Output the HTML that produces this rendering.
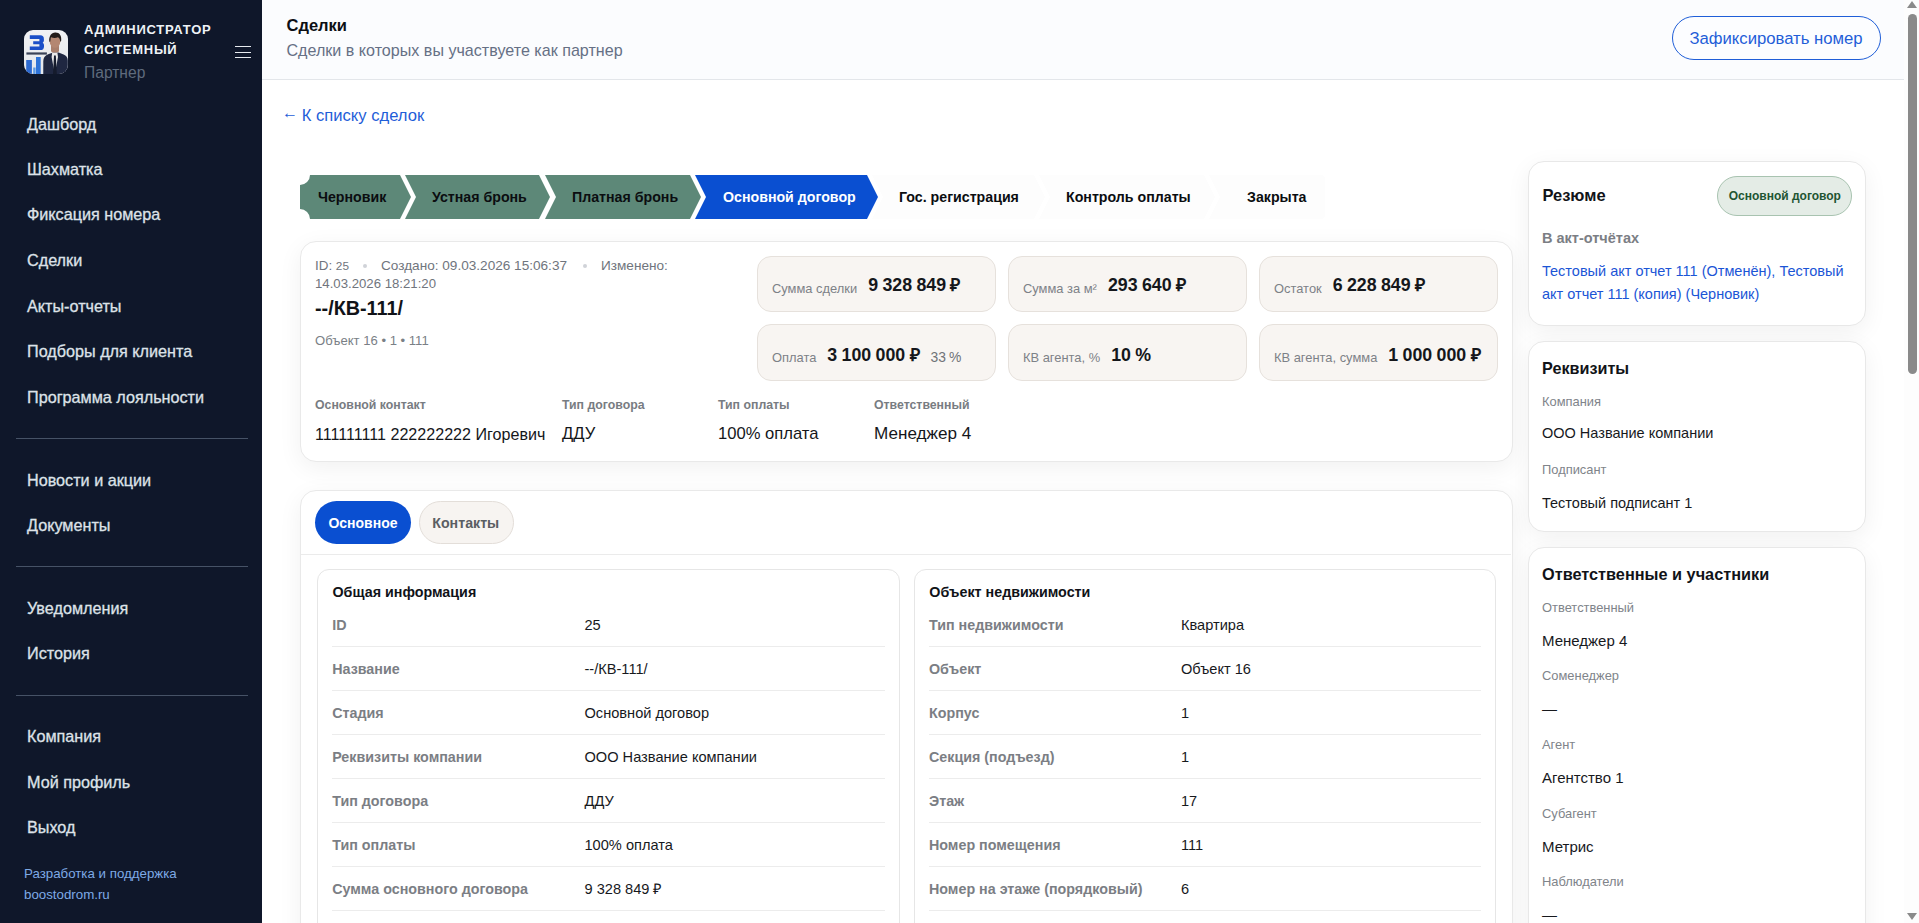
<!DOCTYPE html>
<html lang="ru"><head><meta charset="utf-8"><title>Сделки</title>
<style>
html,body{margin:0;padding:0;width:1919px;height:923px;overflow:hidden;background:#fff}
body{position:relative;font-family:"Liberation Sans",sans-serif}
.b{position:absolute}
.t{position:absolute;white-space:nowrap}
.met{display:flex;align-items:baseline;line-height:24px}
.ml{font-size:12.9px;color:#7d8187;margin-right:11px}
.mv{font-size:17.8px;font-weight:700;color:#15171b;word-spacing:-0.6px;position:relative;top:-1.5px}
.mx{font-size:13.9px;color:#6f7378;margin-left:11px;word-spacing:-1px}
</style></head><body>
<div class="b" style="left:0px;top:0px;width:262px;height:923px;background:#0f172a"></div>
<div class="b" style="left:262px;top:0px;width:1642px;height:79px;background:#fbfcfe"></div>
<div class="b" style="left:262px;top:79px;width:1642px;height:1px;background:#e3e6ea"></div>
<div class="b" style="left:262px;top:80px;width:1642px;height:843px;background:#fff"></div>
<svg class="b" style="left:24px;top:30px" width="44" height="44" viewBox="0 0 44 44">
<defs><clipPath id="lc"><rect x="0" y="0" width="44" height="44" rx="9" ry="9"/></clipPath>
<linearGradient id="bg1" x1="0" y1="0" x2="0" y2="1"><stop offset="0" stop-color="#f1f2f4"/><stop offset="1" stop-color="#e4e7eb"/></linearGradient></defs>
<g clip-path="url(#lc)">
<rect width="44" height="44" fill="url(#bg1)"/>
<path d="M5.8 5.3h10.5a3.6 3.6 0 0 1 3.6 3.6v1.6a2.6 2.6 0 0 1-1.2 2.2 2.8 2.8 0 0 1 1.3 2.4v1.3a3.6 3.6 0 0 1-3.6 3.6H5.8v-3.4h9.6v-2.3H9.2v-3h6.2v-2.2H5.8z" fill="#1b4fc8"/>
<rect x="2.4" y="22.4" width="20.5" height="2.2" fill="#3a4358"/>
<rect x="2.2" y="30" width="5.7" height="14" fill="#2d6ad0"/>
<rect x="9.2" y="37.5" width="2.4" height="7" fill="#5b9ae6"/>
<rect x="12" y="27" width="4.7" height="17" fill="#2f74d8"/>
<rect x="19.8" y="36.5" width="3.2" height="8" fill="#4d8fe2"/>
<rect x="26" y="42" width="3" height="2" fill="#3fa0f0"/>
<rect x="31" y="42" width="4.5" height="2" fill="#3fa0f0"/>
<path d="M19.3 44V31.5c0-3.5 1.5-6 4.8-7.3l5-1.8h5.5l5 2c2.6 1 4.2 3 4.2 6V44z" fill="#1f2741"/>
<path d="M28.2 22.5l2.6 0.3 2.6-0.3 0.6 4.5-3.2 17-3.2-17z" fill="#e9e9ea"/>
<path d="M30 25.5h1.8l1 18.5h-3.8z" fill="#151b2c"/>
<rect x="27" y="14" width="8" height="8.5" rx="2" fill="#a97f6c"/>
<ellipse cx="31" cy="11.5" rx="5.3" ry="6.3" fill="#b48772"/>
<path d="M25.3 11.5c-0.6-5.3 2-8.8 5.9-9 4.2-0.2 6.6 3 6 8.2l-1 1.2c0-2.3-0.8-4-2.2-4.6-2.2 0.8-4.6 0.8-7 0l-0.9 4.8z" fill="#231c1a"/>
</g></svg>
<div class="t " style="left:84px;top:21.70px;font-size:13px;line-height:16px;font-weight:700;color:#eef2f6;letter-spacing:0.75px">АДМИНИСТРАТОР</div>
<div class="t " style="left:84px;top:41.90px;font-size:13px;line-height:16px;font-weight:700;color:#eef2f6;letter-spacing:0.75px">СИСТЕМНЫЙ</div>
<div class="t " style="left:84px;top:62.79px;font-size:15.6px;line-height:20px;font-weight:400;color:#5f6b7d;">Партнер</div>
<div class="b" style="left:235px;top:46px;width:16px;height:1.35px;background:#e6eaef"></div>
<div class="b" style="left:235px;top:51.5px;width:16px;height:1.35px;background:#e6eaef"></div>
<div class="b" style="left:235px;top:57px;width:16px;height:1.35px;background:#e6eaef"></div>
<div class="t " style="left:27px;top:113.59px;font-size:16.2px;line-height:20px;font-weight:400;color:#dde2e8;-webkit-text-stroke:0.3px #dde2e8">Дашборд</div>
<div class="t " style="left:27px;top:158.89px;font-size:16.2px;line-height:20px;font-weight:400;color:#dde2e8;-webkit-text-stroke:0.3px #dde2e8">Шахматка</div>
<div class="t " style="left:27px;top:204.39px;font-size:16.2px;line-height:20px;font-weight:400;color:#dde2e8;-webkit-text-stroke:0.3px #dde2e8">Фиксация номера</div>
<div class="t " style="left:27px;top:249.89px;font-size:16.2px;line-height:20px;font-weight:400;color:#dde2e8;-webkit-text-stroke:0.3px #dde2e8">Сделки</div>
<div class="t " style="left:27px;top:295.59px;font-size:16.2px;line-height:20px;font-weight:400;color:#dde2e8;-webkit-text-stroke:0.3px #dde2e8">Акты-отчеты</div>
<div class="t " style="left:27px;top:340.99px;font-size:16.2px;line-height:20px;font-weight:400;color:#dde2e8;-webkit-text-stroke:0.3px #dde2e8">Подборы для клиента</div>
<div class="t " style="left:27px;top:386.59px;font-size:16.2px;line-height:20px;font-weight:400;color:#dde2e8;-webkit-text-stroke:0.3px #dde2e8">Программа лояльности</div>
<div class="t " style="left:27px;top:469.89px;font-size:16.2px;line-height:20px;font-weight:400;color:#dde2e8;-webkit-text-stroke:0.3px #dde2e8">Новости и акции</div>
<div class="t " style="left:27px;top:515.39px;font-size:16.2px;line-height:20px;font-weight:400;color:#dde2e8;-webkit-text-stroke:0.3px #dde2e8">Документы</div>
<div class="t " style="left:27px;top:597.79px;font-size:16.2px;line-height:20px;font-weight:400;color:#dde2e8;-webkit-text-stroke:0.3px #dde2e8">Уведомления</div>
<div class="t " style="left:27px;top:643.09px;font-size:16.2px;line-height:20px;font-weight:400;color:#dde2e8;-webkit-text-stroke:0.3px #dde2e8">История</div>
<div class="t " style="left:27px;top:726.09px;font-size:16.2px;line-height:20px;font-weight:400;color:#dde2e8;-webkit-text-stroke:0.3px #dde2e8">Компания</div>
<div class="t " style="left:27px;top:772.09px;font-size:16.2px;line-height:20px;font-weight:400;color:#dde2e8;-webkit-text-stroke:0.3px #dde2e8">Мой профиль</div>
<div class="t " style="left:27px;top:817.39px;font-size:16.2px;line-height:20px;font-weight:400;color:#dde2e8;-webkit-text-stroke:0.3px #dde2e8">Выход</div>
<div class="b" style="left:16px;top:438px;width:232px;height:1px;background:#465266"></div>
<div class="b" style="left:16px;top:566px;width:232px;height:1px;background:#465266"></div>
<div class="b" style="left:16px;top:695px;width:232px;height:1px;background:#465266"></div>
<div class="t " style="left:24px;top:864.89px;font-size:13.3px;line-height:17px;font-weight:400;color:#7eaae6;">Разработка и поддержка</div>
<div class="t " style="left:24px;top:885.89px;font-size:13.3px;line-height:17px;font-weight:400;color:#7eaae6;">boostodrom.ru</div>
<div class="t " style="left:286.5px;top:14.78px;font-size:16.5px;line-height:21px;font-weight:700;color:#0c0f14;">Сделки</div>
<div class="t " style="left:286.5px;top:40.42px;font-size:16.1px;line-height:20px;font-weight:400;color:#667085;">Сделки в которых вы участвуете как партнер</div>
<div class="b" style="left:1672px;top:16px;width:209px;height:44px;border:1.3px solid #1f5ed8;border-radius:22px;box-sizing:border-box;background:#fcfdff"></div>
<div class="t " style="left:1689.4px;top:28.01px;font-size:16.7px;line-height:21px;font-weight:400;color:#1f5ed8;">Зафиксировать номер</div>
<div class="t " style="left:282px;top:103.26px;font-size:16px;line-height:20px;font-weight:400;color:#1f5ed8;">←</div>
<div class="t " style="left:301.7px;top:105.05px;font-size:16.6px;line-height:21px;font-weight:400;color:#1f5ed8;">К списку сделок</div>
<div class="b" style="left:300px;top:175px;width:111px;height:44px;background:#5d8878;clip-path:path('M10 0H100L111 22L100 44H10A10 10 0 0 0 0 34V10A10 10 0 0 0 10 0Z')"></div>
<div class="t " style="left:318px;top:188.08px;font-size:14.2px;line-height:18px;font-weight:700;color:#0b0d10;">Черновик</div>
<div class="b" style="left:405px;top:175px;width:145px;height:44px;background:#5d8878;clip-path:polygon(0 0,134px 0,145px 50%,134px 100%,0 100%,11px 50%)"></div>
<div class="t " style="left:432px;top:188.08px;font-size:14.2px;line-height:18px;font-weight:700;color:#0b0d10;">Устная бронь</div>
<div class="b" style="left:545px;top:175px;width:156px;height:44px;background:#5d8878;clip-path:polygon(0 0,145px 0,156px 50%,145px 100%,0 100%,11px 50%)"></div>
<div class="t " style="left:572px;top:188.08px;font-size:14.2px;line-height:18px;font-weight:700;color:#0b0d10;">Платная бронь</div>
<div class="b" style="left:695px;top:175px;width:183px;height:44px;background:#0a4fd1;clip-path:polygon(0 0,172px 0,183px 50%,172px 100%,0 100%,11px 50%)"></div>
<div class="t " style="left:723px;top:188.08px;font-size:14.2px;line-height:18px;font-weight:700;color:#fff;">Основной договор</div>
<div class="b" style="left:872px;top:175px;width:173px;height:44px;background:#fdfdfd;clip-path:polygon(0 0,162px 0,173px 50%,162px 100%,0 100%,11px 50%)"></div>
<div class="t " style="left:899px;top:188.08px;font-size:14.2px;line-height:18px;font-weight:700;color:#0b0d10;">Гос. регистрация</div>
<div class="b" style="left:1039px;top:175px;width:176px;height:44px;background:#fdfdfd;clip-path:polygon(0 0,165px 0,176px 50%,165px 100%,0 100%,11px 50%)"></div>
<div class="t " style="left:1066px;top:188.08px;font-size:14.2px;line-height:18px;font-weight:700;color:#0b0d10;">Контроль оплаты</div>
<div class="b" style="left:1209px;top:175px;width:116px;height:44px;background:#fdfdfd;clip-path:path('M0 0H112A4 4 0 0 1 116 4V40A4 4 0 0 1 112 44H0L11 22Z')"></div>
<div class="t " style="left:1247px;top:188.08px;font-size:14.2px;line-height:18px;font-weight:700;color:#0b0d10;">Закрыта</div>
<div class="b" style="left:300px;top:241px;width:1213px;height:221px;border:1px solid #e9e9e9;border-radius:16px;box-sizing:border-box;background:#fff;box-shadow:0 6px 24px rgba(0,0,0,0.06)"></div>
<div class="t " style="left:315px;top:256.86px;font-size:13.4px;line-height:17px;font-weight:400;color:#70757d;">ID: <span style="font-size:11.8px">25</span></div>
<div class="b" style="left:363px;top:264px;width:4px;height:4px;background:#d0d3d8;border-radius:50%"></div>
<div class="t " style="left:381px;top:256.79px;font-size:13.6px;line-height:17px;font-weight:400;color:#70757d;">Создано: 09.03.2026 15:06:37</div>
<div class="b" style="left:583px;top:264px;width:4px;height:4px;background:#d0d3d8;border-radius:50%"></div>
<div class="t " style="left:601px;top:256.79px;font-size:13.6px;line-height:17px;font-weight:400;color:#70757d;">Изменено:</div>
<div class="t " style="left:315px;top:276.43px;font-size:13.2px;line-height:16px;font-weight:400;color:#70757d;">14.03.2026 18:21:20</div>
<div class="t " style="left:315px;top:295.84px;font-size:19.8px;line-height:25px;font-weight:700;color:#111318;">--/КВ-111/</div>
<div class="t " style="left:315px;top:333.26px;font-size:13.1px;line-height:16px;font-weight:400;color:#7a7f86;">Объект 16 • 1 • 111</div>
<div class="t " style="left:315px;top:397.54px;font-size:12.3px;line-height:15px;font-weight:700;color:#787c82;">Основной контакт</div>
<div class="t " style="left:315px;top:423.72px;font-size:16.1px;line-height:20px;font-weight:400;color:#15171b;">111111111 222222222 Игоревич</div>
<div class="t " style="left:562px;top:397.54px;font-size:12.3px;line-height:15px;font-weight:700;color:#787c82;">Тип договора</div>
<div class="t " style="left:562px;top:423.05px;font-size:16.6px;line-height:21px;font-weight:400;color:#15171b;">ДДУ</div>
<div class="t " style="left:718px;top:397.54px;font-size:12.3px;line-height:15px;font-weight:700;color:#787c82;">Тип оплаты</div>
<div class="t " style="left:718px;top:423.05px;font-size:16.6px;line-height:21px;font-weight:400;color:#15171b;">100% оплата</div>
<div class="t " style="left:874px;top:397.54px;font-size:12.3px;line-height:15px;font-weight:700;color:#787c82;">Ответственный</div>
<div class="t " style="left:874px;top:422.87px;font-size:17.1px;line-height:21px;font-weight:400;color:#15171b;">Менеджер 4</div>
<div class="b" style="left:757px;top:256px;width:239px;height:55.5px;background:#f8f5f2;border:1px solid #e6e1dc;border-radius:14px;box-sizing:border-box"></div>
<div class="t met" style="left:772px;top:274.5px;height:24px;"><span class="ml">Сумма сделки</span><span class="mv">9 328 849 ₽</span></div>
<div class="b" style="left:1008px;top:256px;width:239px;height:55.5px;background:#f8f5f2;border:1px solid #e6e1dc;border-radius:14px;box-sizing:border-box"></div>
<div class="t met" style="left:1023px;top:274.5px;height:24px;"><span class="ml">Сумма за м²</span><span class="mv">293 640 ₽</span></div>
<div class="b" style="left:1259px;top:256px;width:239px;height:55.5px;background:#f8f5f2;border:1px solid #e6e1dc;border-radius:14px;box-sizing:border-box"></div>
<div class="t met" style="left:1274px;top:274.5px;height:24px;"><span class="ml">Остаток</span><span class="mv">6 228 849 ₽</span></div>
<div class="b" style="left:757px;top:324px;width:239px;height:56.5px;background:#f8f5f2;border:1px solid #e6e1dc;border-radius:14px;box-sizing:border-box"></div>
<div class="t met" style="left:772px;top:344px;height:24px;"><span class="ml">Оплата</span><span class="mv">3 100 000 ₽</span><span class="mx">33 %</span></div>
<div class="b" style="left:1008px;top:324px;width:239px;height:56.5px;background:#f8f5f2;border:1px solid #e6e1dc;border-radius:14px;box-sizing:border-box"></div>
<div class="t met" style="left:1023px;top:344px;height:24px;"><span class="ml">КВ агента, %</span><span class="mv">10 %</span></div>
<div class="b" style="left:1259px;top:324px;width:239px;height:56.5px;background:#f8f5f2;border:1px solid #e6e1dc;border-radius:14px;box-sizing:border-box"></div>
<div class="t met" style="left:1274px;top:344px;height:24px;"><span class="ml">КВ агента, сумма</span><span class="mv">1 000 000 ₽</span></div>
<div class="b" style="left:300px;top:490px;width:1213px;height:460px;border:1px solid #e9e9e9;border-radius:16px;box-sizing:border-box;background:#fff;box-shadow:0 6px 24px rgba(0,0,0,0.06)"></div>
<div class="b" style="left:315px;top:501px;width:96px;height:43px;background:#0a4fd1;border-radius:22px"></div>
<div class="t " style="left:328.4px;top:514.05px;font-size:14px;line-height:18px;font-weight:700;color:#fff;">Основное</div>
<div class="b" style="left:419px;top:501px;width:95px;height:43px;background:#f7f4f1;border:1px solid #e3ded9;border-radius:22px;box-sizing:border-box"></div>
<div class="t " style="left:432.3px;top:513.98px;font-size:14.2px;line-height:18px;font-weight:700;color:#5b5e63;">Контакты</div>
<div class="b" style="left:301px;top:554px;width:1210px;height:1px;background:#ebebeb"></div>
<div class="b" style="left:317px;top:569px;width:582.5px;height:400px;border:1px solid #e6e6e6;border-radius:12px;box-sizing:border-box;background:#fff"></div>
<div class="b" style="left:914px;top:569px;width:581.5px;height:400px;border:1px solid #e6e6e6;border-radius:12px;box-sizing:border-box;background:#fff"></div>
<div class="t " style="left:332.5px;top:583.45px;font-size:14.3px;line-height:18px;font-weight:700;color:#111318;">Общая информация</div>
<div class="t " style="left:929.3px;top:583.45px;font-size:14.3px;line-height:18px;font-weight:700;color:#111318;">Объект недвижимости</div>
<div class="t " style="left:332.2px;top:616.05px;font-size:14.3px;line-height:18px;font-weight:700;color:#7b7e84;">ID</div>
<div class="t " style="left:584.5px;top:615.94px;font-size:14.6px;line-height:18px;font-weight:400;color:#17191d;">25</div>
<div class="t " style="left:929px;top:616.05px;font-size:14.3px;line-height:18px;font-weight:700;color:#7b7e84;">Тип недвижимости</div>
<div class="t " style="left:1181px;top:615.94px;font-size:14.6px;line-height:18px;font-weight:400;color:#17191d;">Квартира</div>
<div class="b" style="left:332px;top:646px;width:553px;height:1px;background:#ececec"></div>
<div class="b" style="left:929px;top:646px;width:552px;height:1px;background:#ececec"></div>
<div class="t " style="left:332.2px;top:660.05px;font-size:14.3px;line-height:18px;font-weight:700;color:#7b7e84;">Название</div>
<div class="t " style="left:584.5px;top:659.94px;font-size:14.6px;line-height:18px;font-weight:400;color:#17191d;">--/КВ-111/</div>
<div class="t " style="left:929px;top:660.05px;font-size:14.3px;line-height:18px;font-weight:700;color:#7b7e84;">Объект</div>
<div class="t " style="left:1181px;top:659.94px;font-size:14.6px;line-height:18px;font-weight:400;color:#17191d;">Объект 16</div>
<div class="b" style="left:332px;top:690px;width:553px;height:1px;background:#ececec"></div>
<div class="b" style="left:929px;top:690px;width:552px;height:1px;background:#ececec"></div>
<div class="t " style="left:332.2px;top:704.05px;font-size:14.3px;line-height:18px;font-weight:700;color:#7b7e84;">Стадия</div>
<div class="t " style="left:584.5px;top:703.94px;font-size:14.6px;line-height:18px;font-weight:400;color:#17191d;">Основной договор</div>
<div class="t " style="left:929px;top:704.05px;font-size:14.3px;line-height:18px;font-weight:700;color:#7b7e84;">Корпус</div>
<div class="t " style="left:1181px;top:703.94px;font-size:14.6px;line-height:18px;font-weight:400;color:#17191d;">1</div>
<div class="b" style="left:332px;top:734px;width:553px;height:1px;background:#ececec"></div>
<div class="b" style="left:929px;top:734px;width:552px;height:1px;background:#ececec"></div>
<div class="t " style="left:332.2px;top:748.05px;font-size:14.3px;line-height:18px;font-weight:700;color:#7b7e84;">Реквизиты компании</div>
<div class="t " style="left:584.5px;top:747.94px;font-size:14.6px;line-height:18px;font-weight:400;color:#17191d;">ООО Название компании</div>
<div class="t " style="left:929px;top:748.05px;font-size:14.3px;line-height:18px;font-weight:700;color:#7b7e84;">Секция (подъезд)</div>
<div class="t " style="left:1181px;top:747.94px;font-size:14.6px;line-height:18px;font-weight:400;color:#17191d;">1</div>
<div class="b" style="left:332px;top:778px;width:553px;height:1px;background:#ececec"></div>
<div class="b" style="left:929px;top:778px;width:552px;height:1px;background:#ececec"></div>
<div class="t " style="left:332.2px;top:792.05px;font-size:14.3px;line-height:18px;font-weight:700;color:#7b7e84;">Тип договора</div>
<div class="t " style="left:584.5px;top:791.94px;font-size:14.6px;line-height:18px;font-weight:400;color:#17191d;">ДДУ</div>
<div class="t " style="left:929px;top:792.05px;font-size:14.3px;line-height:18px;font-weight:700;color:#7b7e84;">Этаж</div>
<div class="t " style="left:1181px;top:791.94px;font-size:14.6px;line-height:18px;font-weight:400;color:#17191d;">17</div>
<div class="b" style="left:332px;top:822px;width:553px;height:1px;background:#ececec"></div>
<div class="b" style="left:929px;top:822px;width:552px;height:1px;background:#ececec"></div>
<div class="t " style="left:332.2px;top:836.05px;font-size:14.3px;line-height:18px;font-weight:700;color:#7b7e84;">Тип оплаты</div>
<div class="t " style="left:584.5px;top:835.94px;font-size:14.6px;line-height:18px;font-weight:400;color:#17191d;">100% оплата</div>
<div class="t " style="left:929px;top:836.05px;font-size:14.3px;line-height:18px;font-weight:700;color:#7b7e84;">Номер помещения</div>
<div class="t " style="left:1181px;top:835.94px;font-size:14.6px;line-height:18px;font-weight:400;color:#17191d;">111</div>
<div class="b" style="left:332px;top:866px;width:553px;height:1px;background:#ececec"></div>
<div class="b" style="left:929px;top:866px;width:552px;height:1px;background:#ececec"></div>
<div class="t " style="left:332.2px;top:880.05px;font-size:14.3px;line-height:18px;font-weight:700;color:#7b7e84;">Сумма основного договора</div>
<div class="t " style="left:584.5px;top:879.94px;font-size:14.6px;line-height:18px;font-weight:400;color:#17191d;">9 328 849 ₽</div>
<div class="t " style="left:929px;top:880.05px;font-size:14.3px;line-height:18px;font-weight:700;color:#7b7e84;">Номер на этаже (порядковый)</div>
<div class="t " style="left:1181px;top:879.94px;font-size:14.6px;line-height:18px;font-weight:400;color:#17191d;">6</div>
<div class="b" style="left:332px;top:910px;width:553px;height:1px;background:#ececec"></div>
<div class="b" style="left:929px;top:910px;width:552px;height:1px;background:#ececec"></div>
<div class="b" style="left:1527.5px;top:161px;width:338.5px;height:164.5px;border:1px solid #e8e8e8;border-radius:16px;box-sizing:border-box;background:#fff;box-shadow:0 6px 24px rgba(0,0,0,0.06)"></div>
<div class="t " style="left:1542.4px;top:185.28px;font-size:16.5px;line-height:21px;font-weight:700;color:#111318;">Резюме</div>
<div class="b" style="left:1717px;top:176px;width:135px;height:40px;background:#e4ece6;border:1px solid #a8c3b0;border-radius:20px;box-sizing:border-box"></div>
<div class="t " style="left:1728.7px;top:188.94px;font-size:12px;line-height:15px;font-weight:700;color:#1f5533;">Основной договор</div>
<div class="t " style="left:1542px;top:228.88px;font-size:14.5px;line-height:18px;font-weight:700;color:#7b7e84;">В акт-отчётах</div>
<div class="t " style="left:1542px;top:261.98px;font-size:14.5px;line-height:18px;font-weight:400;color:#1b55d6;">Тестовый акт отчет 111 (Отменён), Тестовый</div>
<div class="t " style="left:1542px;top:284.78px;font-size:14.5px;line-height:18px;font-weight:400;color:#1b55d6;">акт отчет 111 (копия) (Черновик)</div>
<div class="b" style="left:1527.5px;top:341px;width:338.5px;height:190.5px;border:1px solid #e8e8e8;border-radius:16px;box-sizing:border-box;background:#fff;box-shadow:0 6px 24px rgba(0,0,0,0.06)"></div>
<div class="t " style="left:1542px;top:358.49px;font-size:16.2px;line-height:20px;font-weight:700;color:#111318;">Реквизиты</div>
<div class="t " style="left:1542px;top:393.83px;font-size:12.9px;line-height:16px;font-weight:400;color:#80848a;">Компания</div>
<div class="t " style="left:1542px;top:424.48px;font-size:14.5px;line-height:18px;font-weight:400;color:#17191d;">ООО Название компании</div>
<div class="t " style="left:1542px;top:461.83px;font-size:12.9px;line-height:16px;font-weight:400;color:#80848a;">Подписант</div>
<div class="t " style="left:1542px;top:493.58px;font-size:14.5px;line-height:18px;font-weight:400;color:#17191d;">Тестовый подписант 1</div>
<div class="b" style="left:1527.5px;top:546.5px;width:338.5px;height:420px;border:1px solid #e8e8e8;border-radius:16px;box-sizing:border-box;background:#fff;box-shadow:0 6px 24px rgba(0,0,0,0.06)"></div>
<div class="t " style="left:1542px;top:564.45px;font-size:16.3px;line-height:20px;font-weight:700;color:#111318;">Ответственные и участники</div>
<div class="t " style="left:1542px;top:599.53px;font-size:12.9px;line-height:16px;font-weight:400;color:#80848a;">Ответственный</div>
<div class="t " style="left:1542px;top:630.50px;font-size:15px;line-height:19px;font-weight:400;color:#17191d;">Менеджер 4</div>
<div class="t " style="left:1542px;top:668.23px;font-size:12.9px;line-height:16px;font-weight:400;color:#80848a;">Соменеджер</div>
<div class="t " style="left:1542px;top:699.20px;font-size:15px;line-height:19px;font-weight:400;color:#17191d;">—</div>
<div class="t " style="left:1542px;top:736.93px;font-size:12.9px;line-height:16px;font-weight:400;color:#80848a;">Агент</div>
<div class="t " style="left:1542px;top:767.90px;font-size:15px;line-height:19px;font-weight:400;color:#17191d;">Агентство 1</div>
<div class="t " style="left:1542px;top:805.63px;font-size:12.9px;line-height:16px;font-weight:400;color:#80848a;">Субагент</div>
<div class="t " style="left:1542px;top:836.60px;font-size:15px;line-height:19px;font-weight:400;color:#17191d;">Метрис</div>
<div class="t " style="left:1542px;top:874.33px;font-size:12.9px;line-height:16px;font-weight:400;color:#80848a;">Наблюдатели</div>
<div class="t " style="left:1542px;top:905.30px;font-size:15px;line-height:19px;font-weight:400;color:#17191d;">—</div>
<div class="b" style="left:1904px;top:0px;width:15px;height:923px;background:#fdfdfd"></div>
<div class="b" style="left:1907px;top:1px;width:0;height:0;border-left:5px solid transparent;border-right:5px solid transparent;border-bottom:7px solid #8a8a8a"></div>
<div class="b" style="left:1908px;top:14px;width:9px;height:360px;background:#8a8a8a;border-radius:4.5px"></div>
<div class="b" style="left:1907px;top:913px;width:0;height:0;border-left:5px solid transparent;border-right:5px solid transparent;border-top:7px solid #8a8a8a"></div>
</body></html>
